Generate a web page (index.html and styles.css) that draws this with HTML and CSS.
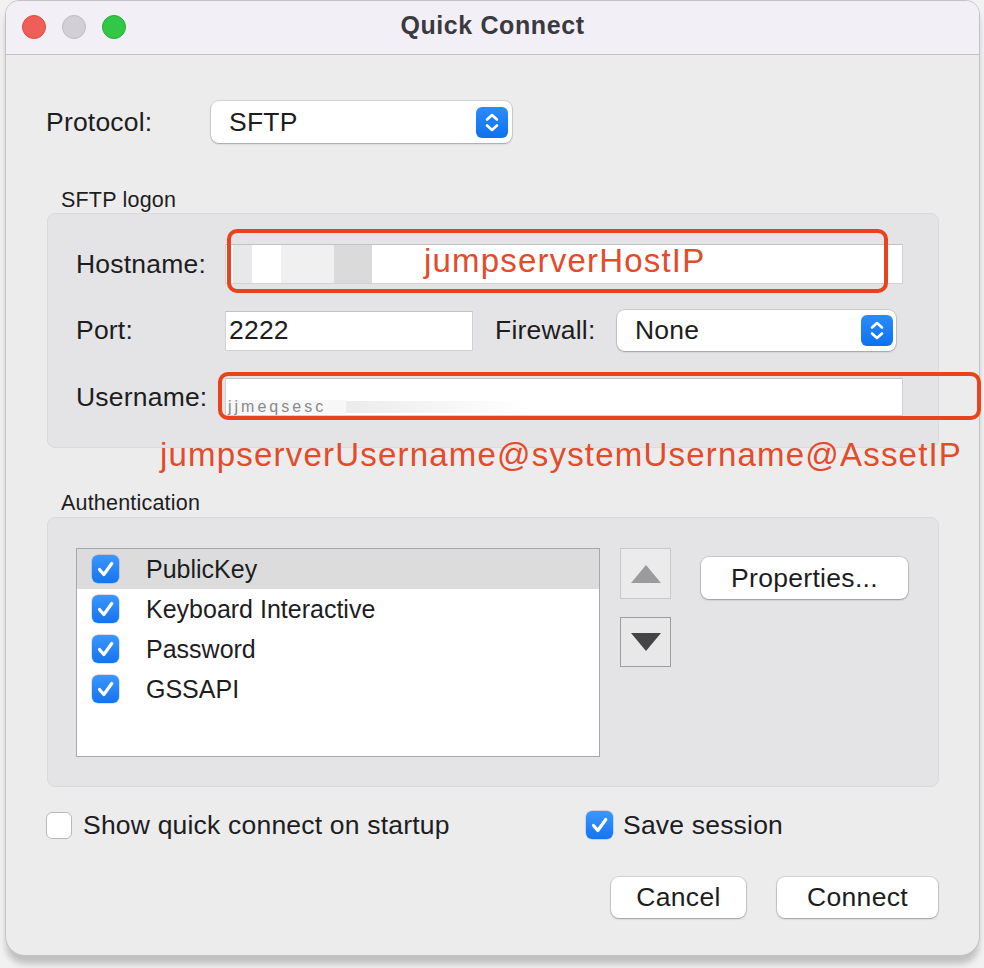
FILE: index.html
```html
<!DOCTYPE html>
<html lang="en">
<head>
<meta charset="utf-8">
<title>Quick Connect</title>
<link rel="stylesheet" href="styles.css">
</head>
<body>
<div class="window">
  <div class="titlebar">
    <div class="lights">
      <span class="light light-red"></span>
      <span class="light light-grey"></span>
      <span class="light light-green"></span>
    </div>
    <div class="title">Quick Connect</div>
    <div></div>
  </div>

  <div class="content">
    <div class="protocol-row">
      <span class="lbl lbl-protocol">Protocol:</span>
      <div class="popup popup-protocol">
        <span class="popup-text">SFTP</span>
        <span class="stepper">
          <svg viewBox="0 0 32 31" width="32" height="31"><path d="M11 12.5 L16 8 L21 12.5" /><path d="M11 18.5 L16 23 L21 18.5" /></svg>
        </span>
      </div>
    </div>

    <div class="group-title">SFTP logon</div>
    <div class="group group-logon">
      <div class="frow host-row">
        <span class="lbl flabel">Hostname:</span>
        <div class="field field-wide field-host">
          <span class="blur blur-a"></span>
          <span class="blur blur-b"></span>
          <span class="blur blur-c"></span>
          <span class="blur blur-d"></span>
        </div>
      </div>
      <div class="frow port-row">
        <span class="lbl flabel">Port:</span>
        <div class="field field-port">2222</div>
        <span class="lbl lbl-firewall">Firewall:</span>
        <div class="popup popup-firewall">
          <span class="popup-text">None</span>
          <span class="stepper">
            <svg viewBox="0 0 32 31" width="32" height="31"><path d="M11 12.5 L16 8 L21 12.5" /><path d="M11 18.5 L16 23 L21 18.5" /></svg>
          </span>
        </div>
      </div>
      <div class="frow user-row">
        <span class="lbl flabel">Username:</span>
        <div class="field field-wide field-user">
          <span class="ghost-text">jjmeqsesc</span>
          <span class="ghost-fade"></span>
        </div>
      </div>
    </div>

    <div class="group-title group-title-auth">Authentication</div>
    <div class="group group-auth">
      <div class="auth-inner">
        <ul class="list">
          <li class="item item-selected"><span class="check"><svg viewBox="0 0 27 28" width="27" height="28"><path d="M7.5 14.5 L11.8 19.5 L19.8 8.5" /></svg></span><span>PublicKey</span></li>
          <li class="item"><span class="check"><svg viewBox="0 0 27 28" width="27" height="28"><path d="M7.5 14.5 L11.8 19.5 L19.8 8.5" /></svg></span><span>Keyboard Interactive</span></li>
          <li class="item"><span class="check"><svg viewBox="0 0 27 28" width="27" height="28"><path d="M7.5 14.5 L11.8 19.5 L19.8 8.5" /></svg></span><span>Password</span></li>
          <li class="item"><span class="check"><svg viewBox="0 0 27 28" width="27" height="28"><path d="M7.5 14.5 L11.8 19.5 L19.8 8.5" /></svg></span><span>GSSAPI</span></li>
        </ul>
        <div class="movers">
          <div class="mover mover-up"><svg viewBox="0 0 30 18" width="30" height="18"><polygon points="15,0 30,18 0,18" /></svg></div>
          <div class="mover mover-down"><svg viewBox="0 0 30 18" width="30" height="18"><polygon points="0,0 30,0 15,18" /></svg></div>
        </div>
        <div class="btn btn-props">Properties...</div>
      </div>
    </div>

    <div class="options">
      <div class="opt opt-show">
        <span class="box-empty"></span>
        <span class="opt-text">Show quick connect on startup</span>
      </div>
      <div class="opt opt-save">
        <span class="check check-save"><svg viewBox="0 0 27 28" width="27" height="28"><path d="M7.5 14.5 L11.8 19.5 L19.8 8.5" /></svg></span>
        <span class="opt-text">Save session</span>
      </div>
    </div>

    <div class="actions">
      <div class="btn btn-cancel">Cancel</div>
      <div class="btn btn-connect">Connect</div>
    </div>
  </div>

  <div class="mark mark-host"></div>
  <div class="mark mark-user"></div>
  <div class="note note-host">jumpserverHostIP</div>
  <div class="note note-user">jumpserverUsername@systemUsername@AssetIP</div>
</div>
</body>
</html>
```

FILE: styles.css
```css
* { box-sizing: border-box; }

html, body {
  margin: 0;
  padding: 0;
}

body {
  width: 984px;
  height: 968px;
  background: #f1f1f2;
  font-family: "Liberation Sans", Arial, sans-serif;
  color: #1d1d1f;
  overflow: hidden;
}

.window {
  position: relative;
  margin-left: 5px;
  width: 975px;
  height: 956px;
  background: #ececed;
  border: 1px solid #c3c3c6;
  border-radius: 14px 14px 20px 20px;
  box-shadow: 0 9px 6px -1px rgba(0, 0, 0, 0.2);
}

/* ---------- title bar ---------- */
.titlebar {
  height: 54px;
  display: grid;
  grid-template-columns: 1fr auto 1fr;
  align-items: center;
  background: #f2eff6;
  border-bottom: 1px solid #c5c3ca;
  border-radius: 13px 13px 0 0;
}

.lights {
  display: flex;
  gap: 16px;
  padding-left: 16px;
  padding-bottom: 2px;
}

.light {
  width: 24px;
  height: 24px;
  border-radius: 50%;
}

.light-red { background: #ef5f57; border: 1px solid #dd4b43; }
.light-grey { background: #d2d0d6; border: 1px solid #bfbdc3; }
.light-green { background: #33c748; border: 1px solid #27aa39; }

.title {
  font-weight: bold;
  font-size: 25px;
  letter-spacing: 0.6px;
  color: #3b3940;
  padding-bottom: 4px;
}

/* ---------- common ---------- */
.lbl {
  font-size: 26.5px;
  letter-spacing: 0.2px;
  color: #1d1d1f;
  white-space: nowrap;
}

.popup {
  display: flex;
  align-items: center;
  justify-content: space-between;
  background: #ffffff;
  border-radius: 8px;
  box-shadow: 0 0 0 1px rgba(0, 0, 0, 0.1), 0 1px 2px rgba(0, 0, 0, 0.22);
}

.popup-text {
  font-size: 26.5px;
  letter-spacing: 0.2px;
  padding-left: 18px;
}

.stepper {
  display: flex;
  width: 32px;
  height: 31px;
  border-radius: 6px;
  background: linear-gradient(#2b8cfc, #0f70f0);
  margin-right: 4px;
}

.stepper path {
  fill: none;
  stroke: #ffffff;
  stroke-width: 2.6;
  stroke-linecap: round;
  stroke-linejoin: round;
}

.field {
  display: flex;
  align-items: center;
  background: #ffffff;
  border: 1px solid #d2d2d4;
  border-top-color: #c2c2c4;
  font-size: 26.5px;
  letter-spacing: 0.2px;
}

.btn {
  display: flex;
  align-items: center;
  justify-content: center;
  background: #ffffff;
  border-radius: 8px;
  box-shadow: 0 0 0 1px rgba(0, 0, 0, 0.11), 0 1px 2px rgba(0, 0, 0, 0.25);
  font-size: 26.5px;
  letter-spacing: 0.3px;
  color: #1d1d1f;
}

.check {
  display: flex;
  flex: none;
  width: 27px;
  height: 28px;
  border-radius: 6px;
  background: linear-gradient(#3b97fd, #1474f2);
  box-shadow: 0 0 0 0.5px rgba(0, 60, 160, 0.3);
}

.check path {
  fill: none;
  stroke: #ffffff;
  stroke-width: 3.2;
  stroke-linecap: round;
  stroke-linejoin: round;
}

/* ---------- content ---------- */
.content {
  display: flex;
  flex-direction: column;
}

.protocol-row {
  display: flex;
  align-items: center;
  margin-top: 46px;
  height: 42px;
  padding-left: 40px;
}

.lbl-protocol { width: 165px; }

.popup-protocol {
  width: 301px;
  height: 42px;
}

.group-title {
  height: 25px;
  line-height: 25px;
  margin-top: 45px;
  padding-left: 55px;
  font-size: 21.5px;
  letter-spacing: 0.2px;
  color: #1d1d1f;
}

.group-title-auth {
  margin-top: 43px;
  margin-bottom: 1px;
}

.group {
  margin-left: 41px;
  width: 892px;
  background: #e4e4e6;
  border: 1px solid #dadadc;
  border-radius: 8px;
}

.group-logon {
  height: 235px;
  display: flex;
  flex-direction: column;
}

.frow {
  display: flex;
  align-items: center;
  padding-left: 28px;
}

.flabel { width: 149px; }

.host-row { margin-top: 30px; height: 40px; }
.port-row { margin-top: 26px; height: 41px; }
.user-row { margin-top: 27px; height: 38px; }

.field-wide { width: 678px; height: 100%; }

.field-host {
  align-items: stretch;
  padding-left: 7px;
}

.blur { display: block; }
.blur-a { width: 19px; background: #e8e8ea; }
.blur-b { width: 29px; background: #ffffff; }
.blur-c { width: 53px; background: #f0f0f1; }
.blur-d { width: 38px; background: #dadadb; }

.field-port {
  width: 248px;
  height: 40px;
  padding-left: 3px;
}

.lbl-firewall {
  margin-left: 22px;
  width: 122px;
}

.popup-firewall {
  width: 279px;
  height: 41px;
}

.popup-firewall .stepper { margin-right: 3px; }

.field-user {
  align-items: flex-end;
  padding-bottom: 1px;
  padding-left: 2px;
}

.ghost-text {
  display: block;
  font-size: 16px;
  line-height: 14px;
  letter-spacing: 3px;
  color: #8a8a8c;
  padding-right: 20px;
  background: #f7f7f7;
}

.ghost-fade {
  display: block;
  width: 180px;
  height: 12px;
  margin-bottom: 1px;
  background: linear-gradient(90deg, #ebebec, #ffffff);
}

/* ---------- authentication ---------- */
.group-auth { height: 270px; }

.auth-inner {
  display: flex;
  align-items: flex-start;
  padding-top: 30px;
  padding-left: 28px;
}

.list {
  list-style: none;
  margin: 0;
  padding: 0;
  width: 524px;
  height: 209px;
  background: #ffffff;
  border: 1px solid #a8a8aa;
}

.item {
  display: flex;
  align-items: center;
  height: 40px;
  padding-left: 15px;
  gap: 27px;
  font-size: 25px;
  color: #1d1d1f;
}

.item-selected { background: #dcdcdd; }

.movers {
  display: flex;
  flex-direction: column;
  gap: 18px;
  margin-left: 20px;
}

.mover {
  display: flex;
  align-items: center;
  justify-content: center;
  width: 51px;
  background: #ebebec;
}

.mover-up {
  height: 51px;
  border: 1px solid #c9c9cb;
}

.mover-up polygon { fill: #9b9b9d; }

.mover-down {
  height: 50px;
  border: 1px solid #9d9d9f;
  background: #e8e8e9;
}

.mover-down polygon { fill: #444446; }

.btn-props {
  margin-left: 30px;
  margin-top: 9px;
  width: 207px;
  height: 42px;
}

/* ---------- options ---------- */
.options {
  display: flex;
  align-items: center;
  margin-top: 23px;
  height: 30px;
  padding-left: 40px;
}

.opt {
  display: flex;
  align-items: center;
}

.opt-show { width: 540px; }

.box-empty {
  width: 26px;
  height: 27px;
  margin-right: 11px;
  background: #ffffff;
  border: 1px solid #b9b9bb;
  border-radius: 6px;
}

.check-save { margin-right: 10px; }

.opt-text {
  font-size: 26.5px;
  letter-spacing: 0.2px;
}

.actions {
  display: flex;
  justify-content: flex-end;
  gap: 31px;
  margin-top: 37px;
  padding-right: 41px;
}

.btn-cancel { width: 135px; height: 41px; }
.btn-connect { width: 161px; height: 41px; }

/* ---------- red annotations (overlays) ---------- */
.mark {
  position: absolute;
  border: 4px solid #e8431c;
  border-radius: 10px;
}

.mark-host {
  left: 221px;
  top: 228px;
  width: 661px;
  height: 64px;
}

.mark-user {
  left: 212px;
  top: 371px;
  width: 763px;
  height: 48px;
}

.note {
  position: absolute;
  font-size: 33px;
  line-height: 33px;
  letter-spacing: 1.2px;
  color: #e34b2b;
  white-space: nowrap;
}

.note-host {
  left: 418px;
  top: 243px;
}

.note-user {
  left: 154px;
  top: 437px;
}
```
